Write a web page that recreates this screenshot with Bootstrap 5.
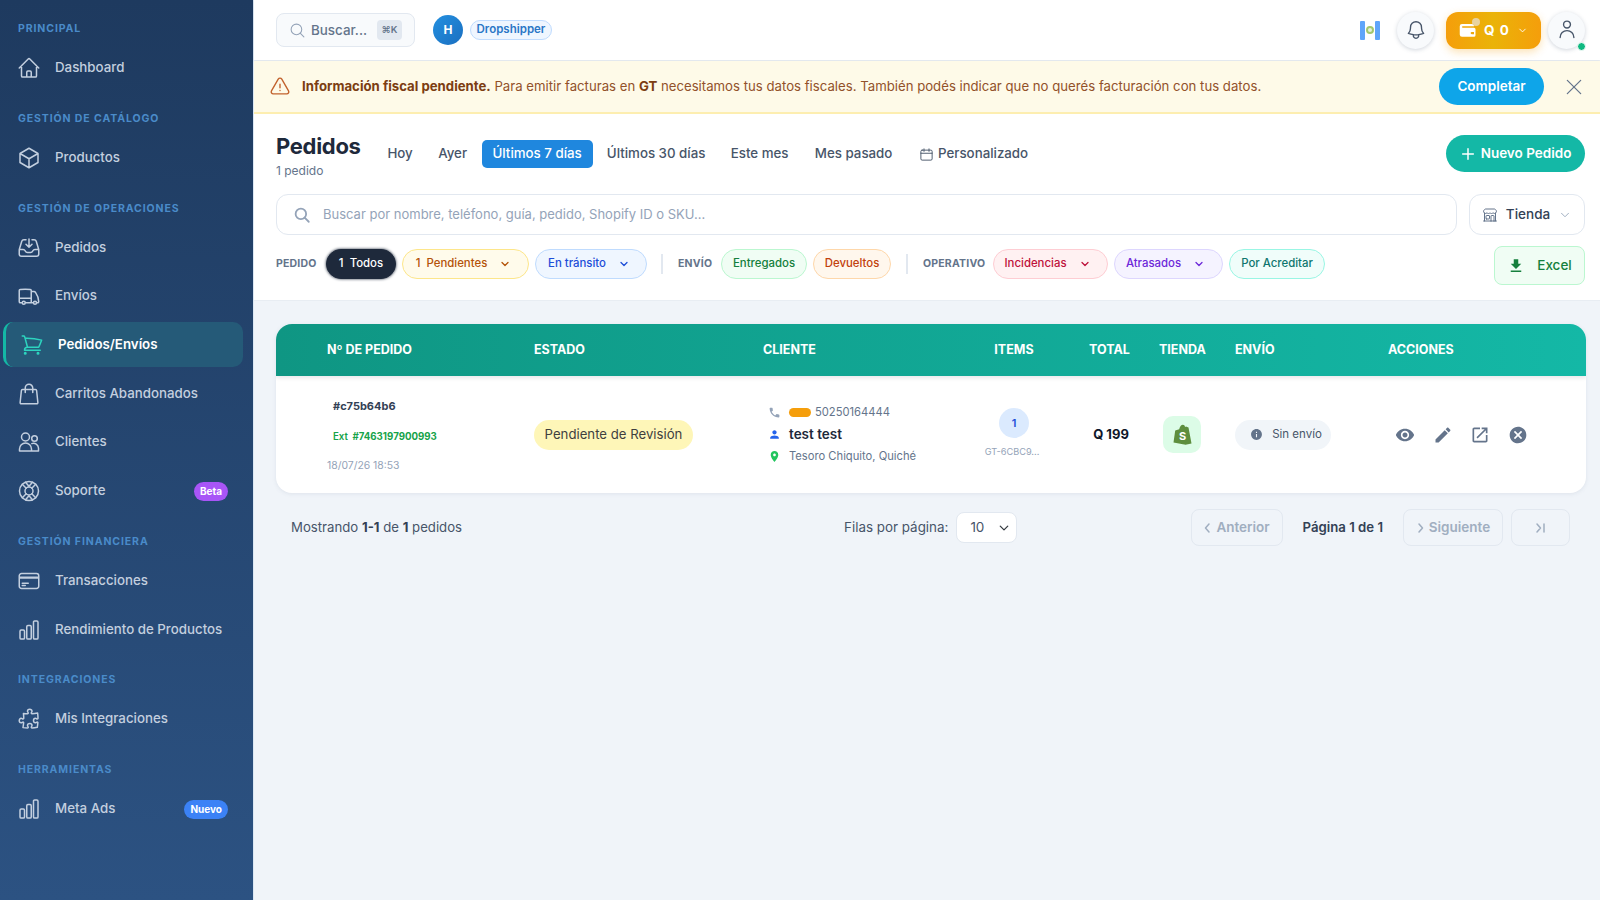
<!DOCTYPE html>
<html lang="es">
<head>
<meta charset="UTF-8">
<meta name="viewport" content="width=device-width, initial-scale=1.0">
<title>Pedidos</title>
<link href="https://cdn.jsdelivr.net/npm/bootstrap@5.3.0/dist/css/bootstrap.min.css" rel="stylesheet">
<style>
body { font-family: Inter, "Noto Sans", sans-serif; background: #f0f4f9; height: 900px; overflow: hidden; color: #1e293b; }
.ic { fill: none; stroke: currentColor; stroke-width: 1.5; stroke-linecap: round; stroke-linejoin: round; flex: none; }
.sol { fill: currentColor; flex: none; }

/* sidebar */
.side { width: 254px; height: 900px; flex: none; background: linear-gradient(180deg, #1e3a5f, #2c5282); padding: 21px 0 0 3px; border-right: 1px solid #dbe7f3; }
.side-label { font-size: 10.5px; font-weight: 700; letter-spacing: .9px; color: #4a8bc9; line-height: 16px; margin: 20.3px 0 8.5px 15px; text-transform: uppercase; }
.side-label:first-child { margin-top: 0; }
.side-item { width: 240px; height: 45px; margin-bottom: 3.7px; padding-left: 14px; display: flex; align-items: center; gap: 14px; color: #c3cfdf; font-size: 13.3px; font-weight: 500; border-radius: 10px; text-decoration: none; }
.side-item.on { background: #255a78; color: #fff; font-weight: 600; border-left: 3px solid #14b8a6; }
.side-item.on .ic { color: #2dd4bf; }
.side-pill { margin-left: auto; margin-right: 15px; font-size: 10px; font-weight: 700; color: #fff; border-radius: 10px; padding: 3px 6px; line-height: 13px; }

/* top bar */
.topb { height: 60px; background: #fff; padding: 0 15px 0 22px; flex-wrap: nowrap; box-shadow: 0 1px 2px rgba(15,23,42,.08); position: relative; }
.top-search { width: 139px; height: 34px; border: 1px solid #e2e8f0; border-radius: 8px; background: #f8fafc; padding: 0 12px 0 12px; gap: 5px; color: #64748b; font-size: 13.4px; font-weight: 500; }
.kbd-box { margin-left: auto; background: #e2e8f0; border-radius: 4px; color: #64748b; font-size: 9.5px; font-weight: 600; padding: 4px 4px; line-height: 12px; width: 25px; text-align: center; }
.ava { width: 30px; height: 30px; border-radius: 50%; background: linear-gradient(135deg, #2490e0, #1a6fc0); color: #fff; font-size: 12px; font-weight: 700; margin-left: 18px; }
.role-pill { margin-left: 7px; height: 20px; width: 82px; border: 1px solid #bfdbfe; background: #eff6ff; color: #2a76c6; border-radius: 10px; font-size: 11.5px; font-weight: 600; }
.flag-box { width: 20px; height: 19px; margin-right: 17px; }
.flag-box i { width: 5px; height: 19px; background: #60a5fa; border-radius: 1px; }
.flag-box b { width: 10px; height: 19px; background: #fff; display: flex; align-items: center; justify-content: center; }
.flag-box b span { width: 8px; height: 8px; border-radius: 50%; border: 2px solid #a3c76d; background: #e8f0d8; }
.round-btn { width: 37px; height: 37px; border-radius: 50%; background: #f8fafc; box-shadow: 0 1px 4px rgba(100,116,139,.3); color: #475569; position: relative; }
.wallet-btn { width: 95px; height: 37px; margin: 0 7px 0 12px; border-radius: 12px; background: linear-gradient(90deg, #f59e0b, #eab308 50%, #f59e0b); box-shadow: 0 3px 8px rgba(245,158,11,.3); color: #fff; font-weight: 700; font-size: 13.5px; letter-spacing: 1px; gap: 7px; position: relative; }
.wallet-dot { position: absolute; left: 26px; top: 6px; width: 8px; height: 8px; border-radius: 50%; background: #e8d3a0; }
.on-dot { position: absolute; right: -1px; bottom: -2px; width: 9px; height: 9px; border-radius: 50%; background: #10b981; border: 1px solid #fff; }

/* aviso */
.notice { height: 53px; margin: 1px 0 0; padding: 0 16px 0 15px; border-radius: 0; border: 0; border-bottom: 2px solid #fdeeb0; background: #fefae8; color: #92512a; font-size: 13.2px; gap: 11px; }
.notice strong { color: #7c3d12; font-weight: 700; }
.notice .ic { color: #c2622d; }
.btn-fill { width: 105px; height: 37px; border-radius: 19px; background: #0ea5e9; color: #fff; font-size: 13.5px; font-weight: 600; border: 0; padding: 0; margin-left: auto; margin-right: 9px; }

/* cabecera pedidos */
.head-box { height: 187px; background: #fff; border-bottom: 1px solid #e8edf3; padding: 17px 15px 0 22px; }
.title-main { font-size: 22px; font-weight: 700; line-height: 30px; color: #1e293b; letter-spacing: -.3px; margin: 0; }
.title-sub { font-size: 12px; color: #64748b; line-height: 16px; margin-top: 2px; }
.tab-row { margin-left: 13px; padding-top: 9px; gap: 0; }
.tab-link { height: 28px; padding: 0 !important; font-size: 13.3px; font-weight: 500; color: #475569; border-radius: 5px !important; display: flex; align-items: center; justify-content: center; }
.nav-pills .tab-link.active { background: #1f87de; color: #fff; }
.btn-new { width: 139px; height: 37px; border-radius: 19px; background: #14b8a6; color: #fff; font-size: 13.5px; font-weight: 600; border: 0; padding: 0; gap: 5px; margin-left: auto; margin-top: 4px; }
.search-line { gap: 12px; margin-top: 15px; }
.search-wide { flex: 1; height: 41px; border: 1px solid #e2e8f0; border-radius: 12px; padding: 0 16px; gap: 12px; color: #94a3b8; font-size: 13px; }
.store-btn { width: 116px; height: 41px; border: 1px solid #e2e8f0; border-radius: 12px; color: #334155; font-size: 13.5px; font-weight: 500; gap: 8px; }
.chip-row { margin-top: 8px; height: 42px; }
.chip-lbl { font-size: 10.5px; font-weight: 700; color: #64748b; letter-spacing: .2px; }
.chip { height: 30px; border-radius: 15px; border: 1px solid; font-size: 11.4px; font-weight: 500; gap: 6px; flex: none; }
.chip-sep { width: 2px; height: 20px; background: #e2e8f0; }
.btn-excel { width: 91px; height: 39px; margin-left: auto; margin-top: 3px; border: 1px solid #bbf7d0; border-radius: 8px; background: #f0fdf4; color: #15803d; font-size: 13.5px; font-weight: 500; gap: 12px; padding: 0; }

/* tabla */
.tbl-card { margin: 23px 14px 0 22px; width: 1310px; border: 0; border-radius: 16px; overflow: hidden; box-shadow: 0 1px 4px rgba(100,116,139,.12); }
.tbl-main { table-layout: fixed; width: 1310px; margin: 0; }
.tbl-main th { height: 52px; border: 0; background: transparent; color: #fff; font-size: 12.5px; font-weight: 700; vertical-align: middle; padding: 0 16px; white-space: nowrap; }
.tbl-main thead tr { background: linear-gradient(90deg, #0f9683, #14b8a6); box-shadow: 0 2px 4px rgba(15,23,42,.1); }
.tbl-main td { height: 117px; border: 0; vertical-align: middle; padding: 0 16px; }
.tbl-main td.order-cell { padding: 2px 16px 0 51px; }
.order-id { font-size: 11px; font-weight: 700; color: #334155; margin: 0 0 15px 6px; line-height: 16px; }
.order-ext { font-size: 9.7px; font-weight: 600; color: #16a34a; margin: 0 0 13px 6px; line-height: 16px; }
.order-ext b { font-weight: 700; margin-left: 2px; }
.order-date { font-size: 10.4px; color: #94a3b8; line-height: 16px; }
.state-pill { width: 159px; height: 30px; background: #fef6b8; border-radius: 15px; color: #3f3f3f; font-size: 13.2px; }
.cli-line { gap: 8px; padding-left: 5px; height: 22px; color: #64748b; font-size: 11.2px; }
.cli-line .nm { color: #1e293b; font-size: 13.5px; font-weight: 600; }
.phone-tag { width: 22px; height: 9px; border-radius: 5px; background: #f59e0b; margin-right: -4px; }
.tbl-main td.qty-cell { padding-bottom: 2px; }
.qty-dot { width: 30px; height: 30px; border-radius: 50%; background: #dbeafe; color: #1d4ed8; font-size: 11px; font-weight: 600; }
.qty-sku { font-size: 9.2px; color: #94a3b8; margin: 7px 0 0 -4px; white-space: nowrap; line-height: 14px; }
.tot-val { font-size: 13px; font-weight: 700; color: #0f172a; }
.tbl-main td.tot-val { padding-left: 19px; padding-right: 13px; }
.tbl-main td.shop-cell { padding-left: 20px; padding-right: 0; }
.shop-box { width: 38px; height: 37px; border-radius: 10px; background: #dcfce7; }
.ship-pill { width: 96px; height: 30px; background: #f1f5f9; border-radius: 15px; color: #475569; font-size: 11.5px; gap: 9px; padding-left: 6px; }
.act-row { gap: 17.5px; padding-left: 7px; color: #64748b; }

/* pie */
.pager { margin: 16px 30px 0 37px; width: 1279px; color: #475569; font-size: 13.2px; height: 37px; }
.pager b { font-weight: 700; color: #334155; }
.per-page { margin-left: 373px; gap: 8px; font-size: 13.4px; }
.sel-mini { width: 61px; height: 31px; padding: 0 0 0 13px; border-color: #e2e8f0; border-radius: 8px; font-size: 13.5px; color: #475569; background-size: 10px; background-position: right 7px center; }
.pg-btn { height: 37px; border: 1px solid #e2e8f0; border-radius: 8px; background: transparent; color: #a0aec0; font-size: 13.5px; font-weight: 600; gap: 4px; padding: 0; }
.pg-txt { font-weight: 600; color: #334155; margin: 0 20px; white-space: nowrap; }
</style>
</head>
<body class="d-flex">

<svg width="0" height="0" class="d-none">
  <symbol id="chart" viewBox="0 0 24 24"><path d="M3 13.125C3 12.504 3.504 12 4.125 12h2.25c.621 0 1.125.504 1.125 1.125v6.75C7.5 20.496 6.996 21 6.375 21h-2.25A1.125 1.125 0 013 19.875v-6.75zM9.75 8.625c0-.621.504-1.125 1.125-1.125h2.25c.621 0 1.125.504 1.125 1.125v11.25c0 .621-.504 1.125-1.125 1.125h-2.25a1.125 1.125 0 01-1.125-1.125V8.625zM16.5 4.125c0-.621.504-1.125 1.125-1.125h2.25C20.496 3 21 3.504 21 4.125v15.75c0 .621-.504 1.125-1.125 1.125h-2.25a1.125 1.125 0 01-1.125-1.125V4.125z"/></symbol>
  <symbol id="chev" viewBox="0 0 24 24"><path d="M6 9l6 6 6-6"/></symbol>
</svg>

<!-- Menu lateral -->
<aside class="side">
  <div class="side-label">Principal</div>
  <a class="side-item" href="#"><svg class="ic" width="24" height="24" viewBox="0 0 24 24"><path d="M2.25 12l8.954-8.955c.44-.439 1.152-.439 1.591 0L21.75 12M4.5 9.75v10.125c0 .621.504 1.125 1.125 1.125H9.75v-4.875c0-.621.504-1.125 1.125-1.125h2.25c.621 0 1.125.504 1.125 1.125V21h4.125c.621 0 1.125-.504 1.125-1.125V9.75M8.25 21h8.25"/></svg>Dashboard</a>
  <div class="side-label">Gestión de Catálogo</div>
  <a class="side-item" href="#"><svg class="ic" width="24" height="24" viewBox="0 0 24 24"><path d="M21 7.5l-9-5.25L3 7.5m18 0l-9 5.25m9-5.25v9l-9 5.25M3 7.5l9 5.25M3 7.5v9l9 5.25m0-9v9"/></svg>Productos</a>
  <div class="side-label">Gestión de Operaciones</div>
  <a class="side-item" href="#"><svg class="ic" width="24" height="24" viewBox="0 0 24 24"><path d="M9 3.75H6.912a2.25 2.25 0 00-2.15 1.588L2.35 13.177a2.25 2.25 0 00-.1.661V18a2.25 2.25 0 002.25 2.25h15A2.25 2.25 0 0021.75 18v-4.162c0-.224-.034-.447-.1-.661L19.24 5.338a2.25 2.25 0 00-2.15-1.588H15M2.25 13.5h3.86a2.25 2.25 0 012.012 1.244l.256.512a2.25 2.25 0 002.013 1.244h3.218a2.25 2.25 0 002.013-1.244l.256-.512a2.25 2.25 0 012.013-1.244h3.859M12 3v8.25m0 0l-3-3m3 3l3-3"/></svg>Pedidos</a>
  <a class="side-item" href="#"><svg class="ic" width="24" height="24" viewBox="0 0 24 24"><path d="M8.25 18.75a1.5 1.5 0 01-3 0m3 0a1.5 1.5 0 00-3 0m3 0h6m-9 0H3.375a1.125 1.125 0 01-1.125-1.125V14.25m17.25 4.5a1.5 1.5 0 01-3 0m3 0a1.5 1.5 0 00-3 0m3 0h1.125c.621 0 1.129-.504 1.09-1.124a17.902 17.902 0 00-3.213-9.193 2.056 2.056 0 00-1.58-.86H14.25M16.5 18.75h-2.25m0-11.177v-.958c0-.568-.422-1.048-.987-1.106a48.554 48.554 0 00-10.026 0 1.106 1.106 0 00-.987 1.106v7.635m12-6.677v6.677m0 4.5v-4.5m0 0h-12"/></svg>Envíos</a>
  <a class="side-item on" href="#"><svg class="ic" width="24" height="24" viewBox="0 0 24 24"><path d="M2.25 3h1.386c.51 0 .955.343 1.087.835l.383 1.437M7.5 14.25a3 3 0 00-3 3h15.75m-12.75-3h11.218c1.121-2.3 2.1-4.684 2.924-7.138a60.114 60.114 0 00-16.536-1.84M7.5 14.25L5.106 5.272M6 20.25a.75.75 0 11-1.5 0 .75.75 0 011.5 0zm12.75 0a.75.75 0 11-1.5 0 .75.75 0 011.5 0z"/></svg>Pedidos/Envíos</a>
  <a class="side-item" href="#"><svg class="ic" width="24" height="24" viewBox="0 0 24 24"><path d="M15.75 10.5V6a3.75 3.75 0 10-7.5 0v4.5m11.356-1.993l1.263 12c.07.665-.45 1.243-1.119 1.243H4.25a1.125 1.125 0 01-1.12-1.243l1.264-12A1.125 1.125 0 015.513 7.5h12.974c.576 0 1.059.435 1.119 1.007z"/></svg>Carritos Abandonados</a>
  <a class="side-item" href="#"><svg class="ic" width="24" height="24" viewBox="0 0 24 24"><circle cx="8.5" cy="7" r="4"/><circle cx="17.5" cy="8.5" r="2.8"/><path d="M2.5 21v-2a6 6 0 0112 0v2zM14.8 13.6a5 5 0 016.7 4.4v3h-7"/></svg>Clientes</a>
  <a class="side-item" href="#"><svg class="ic" width="24" height="24" viewBox="0 0 24 24"><circle cx="12" cy="12" r="9.5"/><circle cx="12" cy="12" r="4"/><path d="M5.3 5.3l3.9 3.9M18.7 5.3l-3.9 3.9M5.3 18.7l3.9-3.9M18.7 18.7l-3.9-3.9M8.5 3.2l3.5 4 3.5-4M8.5 20.8l3.5-4 3.5 4"/></svg>Soporte<span class="side-pill" style="background:#a855f7">Beta</span></a>
  <div class="side-label">Gestión Financiera</div>
  <a class="side-item" href="#"><svg class="ic" width="24" height="24" viewBox="0 0 24 24"><path d="M2.25 8.25h19.5M2.25 9h19.5m-16.5 5.25h6m-6 2.25h3m-3.75 3h15a2.25 2.25 0 002.25-2.25V6.75A2.25 2.25 0 0019.5 4.5h-15a2.25 2.25 0 00-2.25 2.25v10.5A2.25 2.25 0 004.5 19.5z"/></svg>Transacciones</a>
  <a class="side-item" href="#"><svg class="ic" width="24" height="24"><use href="#chart"/></svg>Rendimiento de Productos</a>
  <div class="side-label">Integraciones</div>
  <a class="side-item" href="#"><svg class="ic" width="24" height="24" viewBox="0 0 24 24"><path d="M14.25 6.087c0-.355.186-.676.401-.959.221-.29.349-.634.349-1.003 0-1.036-1.007-1.875-2.25-1.875s-2.25.84-2.25 1.875c0 .369.128.713.349 1.003.215.283.401.604.401.959v0a.64.64 0 01-.657.643 48.39 48.39 0 01-4.163-.3c.186 1.613.293 3.25.315 4.907a.656.656 0 01-.658.663v0c-.355 0-.676-.186-.959-.401a1.647 1.647 0 00-1.003-.349c-1.036 0-1.875 1.007-1.875 2.25s.84 2.25 1.875 2.25c.369 0 .713-.128 1.003-.349.283-.215.604-.401.959-.401v0c.31 0 .555.26.532.57a48.039 48.039 0 01-.642 5.056c1.518.19 3.058.309 4.616.354a.64.64 0 00.657-.643v0c0-.355-.186-.676-.401-.959a1.647 1.647 0 01-.349-1.003c0-1.035 1.008-1.875 2.25-1.875 1.243 0 2.25.84 2.25 1.875 0 .369-.128.713-.349 1.003-.215.283-.4.604-.4.959v0c0 .333.277.599.61.58a48.1 48.1 0 005.427-.63 48.05 48.05 0 00.582-4.717.532.532 0 00-.533-.57v0c-.355 0-.676.186-.959.401-.29.221-.634.349-1.003.349-1.035 0-1.875-1.007-1.875-2.25s.84-2.25 1.875-2.25c.37 0 .713.128 1.003.349.283.215.604.401.96.401v0a.656.656 0 00.658-.663 48.422 48.422 0 00-.37-5.36c-1.886.342-3.81.574-5.766.689a.578.578 0 01-.61-.58v0z"/></svg>Mis Integraciones</a>
  <div class="side-label">Herramientas</div>
  <a class="side-item" href="#"><svg class="ic" width="24" height="24"><use href="#chart"/></svg>Meta Ads<span class="side-pill" style="background:#3b82f6">Nuevo</span></a>
</aside>

<main class="flex-grow-1">
  <!-- Barra superior -->
  <nav class="navbar topb">
    <div class="d-flex align-items-center">
      <div class="top-search d-flex align-items-center">
        <svg class="ic" width="17" height="17" viewBox="0 0 24 24" style="color:#94a3b8"><circle cx="10.5" cy="10.5" r="7.5"/><path d="M21 21l-5.2-5.2"/></svg>
        <span>Buscar...</span><span class="kbd-box">⌘K</span>
      </div>
      <div class="ava d-flex align-items-center justify-content-center">H</div>
      <div class="role-pill d-flex align-items-center justify-content-center">Dropshipper</div>
    </div>
    <div class="d-flex align-items-center">
      <div class="flag-box d-flex"><i></i><b><span></span></b><i></i></div>
      <div class="round-btn d-flex align-items-center justify-content-center"><svg class="ic" width="22" height="22" viewBox="0 0 24 24"><path d="M14.857 17.082a23.848 23.848 0 005.454-1.31A8.967 8.967 0 0118 9.75v-.7V9A6 6 0 006 9v.75a8.967 8.967 0 01-2.312 6.022c1.733.64 3.56 1.085 5.455 1.31m5.714 0a24.255 24.255 0 01-5.714 0m5.714 0a3 3 0 11-5.714 0"/></svg></div>
      <div class="wallet-btn d-flex align-items-center justify-content-center">
        <svg class="sol" width="18" height="18" viewBox="0 0 24 24"><path d="M4 4h14a2 2 0 012 2v1H5a1 1 0 000 2h15a2 2 0 012 2v8a2 2 0 01-2 2H4a3 3 0 01-3-3V7a3 3 0 013-3zm13 10.5a1.5 1.5 0 100 3h3v-3z"/></svg>
        <span class="wallet-dot"></span>
        <span>Q 0</span>
        <svg class="ic" width="11" height="11" style="stroke-width:2"><use href="#chev"/></svg>
      </div>
      <div class="round-btn d-flex align-items-center justify-content-center"><svg class="ic" width="22" height="22" viewBox="0 0 24 24"><path d="M15.75 6a3.75 3.75 0 11-7.5 0 3.75 3.75 0 017.5 0zM4.5 20.118a7.5 7.5 0 0115 0"/></svg><span class="on-dot"></span></div>
    </div>
  </nav>

  <!-- Aviso fiscal -->
  <div class="alert notice d-flex align-items-center" role="alert">
    <svg class="ic" width="22" height="22" viewBox="0 0 24 24"><path d="M12 9v3.75m-9.303 3.376c-.866 1.5.217 3.374 1.948 3.374h14.71c1.73 0 2.813-1.874 1.948-3.374L13.949 3.378c-.866-1.5-3.032-1.5-3.898 0L2.697 16.126zM12 15.75h.007v.008H12v-.008z"/></svg>
    <span><strong>Información fiscal pendiente.</strong> Para emitir facturas en <strong>GT</strong> necesitamos tus datos fiscales. También podés indicar que no querés facturación con tus datos.</span>
    <button class="btn btn-fill">Completar</button>
    <svg class="ic" width="20" height="20" viewBox="0 0 24 24" style="color:#64748b"><path d="M4 4l16 16M20 4L4 20"/></svg>
  </div>

  <!-- Cabecera de pedidos -->
  <section class="head-box">
    <div class="d-flex">
      <div>
        <h1 class="title-main">Pedidos</h1>
        <div class="title-sub">1 pedido</div>
      </div>
      <ul class="nav nav-pills tab-row flex-nowrap">
        <li class="nav-item"><a class="nav-link tab-link" style="width:53px" href="#">Hoy</a></li>
        <li class="nav-item"><a class="nav-link tab-link" style="width:52px" href="#">Ayer</a></li>
        <li class="nav-item"><a class="nav-link tab-link active" style="width:111px;margin-left:3px" href="#">Últimos 7 días</a></li>
        <li class="nav-item"><a class="nav-link tab-link" style="width:127px" href="#">Últimos 30 días</a></li>
        <li class="nav-item"><a class="nav-link tab-link" style="width:80px" href="#">Este mes</a></li>
        <li class="nav-item"><a class="nav-link tab-link" style="width:108px" href="#">Mes pasado</a></li>
        <li class="nav-item"><a class="nav-link tab-link gap-1" style="width:132px" href="#"><svg class="ic" width="15" height="15" viewBox="0 0 24 24"><rect x="3" y="5" width="18" height="16" rx="2"/><path d="M3 10h18M8 3v4M16 3v4"/></svg>Personalizado</a></li>
      </ul>
      <button class="btn btn-new d-flex align-items-center justify-content-center"><svg class="ic" width="16" height="16" viewBox="0 0 24 24" style="stroke-width:2.2"><path d="M12 4v16M4 12h16"/></svg>Nuevo Pedido</button>
    </div>

    <div class="search-line d-flex">
      <div class="search-wide d-flex align-items-center">
        <svg class="ic" width="18" height="18" viewBox="0 0 24 24" style="stroke-width:2.4"><circle cx="10.5" cy="10.5" r="7"/><path d="M21 21l-5.5-5.5"/></svg>
        <span>Buscar por nombre, teléfono, guía, pedido, Shopify ID o SKU...</span>
      </div>
      <div class="store-btn d-flex align-items-center justify-content-center">
        <svg class="ic" width="16" height="16" viewBox="0 0 24 24" style="color:#64748b"><path d="M13.5 21v-7.5a.75.75 0 01.75-.75h3a.75.75 0 01.75.75V21m-4.5 0H2.36m11.14 0H18m0 0h3.64m-1.39 0V9.349m-16.5 11.65V9.35m0 0a3.001 3.001 0 003.75-.615A2.993 2.993 0 009.75 9.75c.896 0 1.7-.393 2.25-1.016a2.993 2.993 0 002.25 1.016c.896 0 1.7-.393 2.25-1.016a3.001 3.001 0 003.75.614m-16.5 0a3.004 3.004 0 01-.621-4.72L4.318 3.44A1.5 1.5 0 015.378 3h13.243a1.5 1.5 0 011.06.44l1.19 1.189a3 3 0 01-.621 4.72m-13.5 8.65h3.75a.75.75 0 00.75-.75V13.5a.75.75 0 00-.75-.75H6.75a.75.75 0 00-.75.75v3.75c0 .415.336.75.75.75z"/></svg>
        Tienda
        <svg class="ic" width="14" height="14" style="color:#94a3b8"><use href="#chev"/></svg>
      </div>
    </div>

    <div class="chip-row d-flex align-items-center">
      <span class="chip-lbl" style="width:50px">PEDIDO</span>
      <span class="chip d-flex align-items-center justify-content-center" style="width:70px;background:#1e293b;border-color:#1e293b;color:#fff;box-shadow:0 0 3px #1e293b;margin-right:6px">1&nbsp; Todos</span>
      <span class="chip d-flex align-items-center justify-content-center" style="width:127px;background:#fffbeb;border-color:#fde68a;color:#b45309;margin-right:6px;gap:12px;padding-right:4px"><span>1&nbsp; Pendientes</span><svg class="ic" width="12" height="12" style="stroke-width:2.6"><use href="#chev"/></svg></span>
      <span class="chip d-flex align-items-center justify-content-center" style="width:112px;background:#eff6ff;border-color:#bfdbfe;color:#1d4ed8;gap:12px;padding-right:4px"><span>En tránsito</span><svg class="ic" width="12" height="12" style="stroke-width:2.6"><use href="#chev"/></svg></span>
      <span class="chip-sep" style="margin:0 15px 0 14px"></span>
      <span class="chip-lbl" style="width:43px">ENVÍO</span>
      <span class="chip d-flex align-items-center justify-content-center" style="width:86px;background:#f0fdf4;border-color:#bbf7d0;color:#15803d;margin-right:6px">Entregados</span>
      <span class="chip d-flex align-items-center justify-content-center" style="width:78px;background:#fff7ed;border-color:#fed7aa;color:#c2410c">Devueltos</span>
      <span class="chip-sep" style="margin:0 15px"></span>
      <span class="chip-lbl" style="width:70px">OPERATIVO</span>
      <span class="chip d-flex align-items-center justify-content-center" style="width:115px;background:#fff1f2;border-color:#fecdd3;color:#be123c;margin-right:6px;gap:12px;padding-right:6px"><span>Incidencias</span><svg class="ic" width="12" height="12" style="stroke-width:2.6"><use href="#chev"/></svg></span>
      <span class="chip d-flex align-items-center justify-content-center" style="width:109px;background:#f5f3ff;border-color:#ddd6fe;color:#6d28d9;margin-right:6px;gap:12px;padding-right:6px"><span>Atrasados</span><svg class="ic" width="12" height="12" style="stroke-width:2.6"><use href="#chev"/></svg></span>
      <span class="chip d-flex align-items-center justify-content-center" style="width:96px;background:#f0fdfa;border-color:#99f6e4;color:#0f766e">Por Acreditar</span>
      <button class="btn btn-excel d-flex align-items-center justify-content-center"><svg class="sol" width="18" height="18" viewBox="0 0 24 24"><path d="M5 20h14v-2H5v2zM19 9h-4V3H9v6H5l7 7 7-7z"/></svg>Excel</button>
    </div>
  </section>

  <!-- Tabla de pedidos -->
  <div class="card tbl-card">
    <table class="table tbl-main">
      <colgroup><col style="width:242px"><col style="width:229px"><col style="width:208px"><col style="width:118px"><col style="width:70px"><col style="width:76px"><col style="width:153px"><col style="width:214px"></colgroup>
      <thead>
        <tr>
          <th style="padding-left:51px">Nº DE PEDIDO</th>
          <th>ESTADO</th>
          <th>CLIENTE</th>
          <th class="text-center">ITEMS</th>
          <th class="text-center">TOTAL</th>
          <th class="text-center">TIENDA</th>
          <th>ENVÍO</th>
          <th>ACCIONES</th>
        </tr>
      </thead>
      <tbody>
        <tr>
          <td class="order-cell">
            <div class="order-id">#c75b64b6</div>
            <div class="order-ext">Ext <b>#7463197900993</b></div>
            <div class="order-date">18/07/26 18:53</div>
          </td>
          <td><span class="state-pill d-flex align-items-center justify-content-center">Pendiente de Revisión</span></td>
          <td>
            <div class="cli-line d-flex align-items-center"><svg class="sol" width="13" height="13" viewBox="0 0 24 24" style="color:#94a3b8"><path d="M6.62 10.79c1.44 2.83 3.76 5.14 6.59 6.59l2.2-2.2c.27-.27.67-.36 1.02-.24 1.12.37 2.33.57 3.57.57.55 0 1 .45 1 1V20c0 .55-.45 1-1 1-9.39 0-17-7.61-17-17 0-.55.45-1 1-1h3.5c.55 0 1 .45 1 1 0 1.25.2 2.45.57 3.57.11.35.03.74-.25 1.02l-2.2 2.2z"/></svg><span class="phone-tag"></span><span>50250164444</span></div>
            <div class="cli-line d-flex align-items-center"><svg class="sol" width="13" height="13" viewBox="0 0 24 24" style="color:#2563eb"><path d="M12 12c2.21 0 4-1.79 4-4s-1.79-4-4-4-4 1.79-4 4 1.79 4 4 4zm0 2c-2.67 0-8 1.34-8 4v2h16v-2c0-2.66-5.33-4-8-4z"/></svg><span class="nm">test test</span></div>
            <div class="cli-line d-flex align-items-center"><svg class="sol" width="13" height="13" viewBox="0 0 24 24" style="color:#22c55e"><path d="M12 2C8.13 2 5 5.13 5 9c0 5.25 7 13 7 13s7-7.75 7-13c0-3.87-3.13-7-7-7zm0 9.5c-1.38 0-2.5-1.12-2.5-2.5s1.12-2.5 2.5-2.5 2.5 1.12 2.5 2.5-1.12 2.5-2.5 2.5z"/></svg><span>Tesoro Chiquito, Quiché</span></div>
          </td>
          <td class="text-center qty-cell">
            <div class="qty-dot d-flex align-items-center justify-content-center mx-auto">1</div>
            <div class="qty-sku">GT-6CBC9...</div>
          </td>
          <td class="text-center tot-val">Q&nbsp;199</td>
          <td class="shop-cell">
            <div class="shop-box d-flex align-items-center justify-content-center">
              <svg width="19" height="21" viewBox="0 0 19 21"><path d="M13 2.6l-.9.3C11.7 1.6 11 .8 9.9 .8 8.2 .8 6.7 2.7 6.2 5.2L3 6.2c-.8.2-.8.3-.9 1L.5 18.5 12.6 20.8 18.5 19.5 15.5 3.4 13 2.6z" fill="#5e8e3e"/><text x="9.5" y="16" font-size="11" font-weight="700" font-family="Inter, sans-serif" fill="#fff" text-anchor="middle">S</text></svg>
            </div>
          </td>
          <td>
            <div class="ship-pill d-flex align-items-center justify-content-center"><svg class="sol" width="13" height="13" viewBox="0 0 24 24" style="color:#64748b"><path d="M12 2C6.48 2 2 6.48 2 12s4.48 10 10 10 10-4.48 10-10S17.52 2 12 2zm1 15h-2v-6h2v6zm0-8h-2V7h2v2z"/></svg>Sin envío</div>
          </td>
          <td>
            <div class="act-row d-flex align-items-center">
              <svg class="sol" width="20" height="20" viewBox="0 0 24 24"><path d="M12 4.5C7 4.5 2.73 7.61 1 12c1.73 4.39 6 7.5 11 7.5s9.27-3.11 11-7.5c-1.73-4.39-6-7.5-11-7.5zM12 17c-2.76 0-5-2.24-5-5s2.24-5 5-5 5 2.24 5 5-2.24 5-5 5zm0-8c-1.66 0-3 1.34-3 3s1.34 3 3 3 3-1.34 3-3-1.34-3-3-3z"/></svg>
              <svg class="sol" width="20" height="20" viewBox="0 0 24 24"><path d="M3 17.25V21h3.75L17.81 9.94l-3.75-3.75L3 17.25zM20.71 7.04c.39-.39.39-1.02 0-1.41l-2.34-2.34c-.39-.39-1.02-.39-1.41 0l-1.83 1.83 3.75 3.75 1.83-1.83z"/></svg>
              <svg class="sol" width="20" height="20" viewBox="0 0 24 24"><path d="M19 19H5V5h7V3H5c-1.11 0-2 .9-2 2v14c0 1.1.89 2 2 2h14c1.1 0 2-.9 2-2v-7h-2v7zM14 3v2h3.59l-9.83 9.83 1.41 1.41L19 6.41V10h2V3h-7z"/></svg>
              <svg class="sol" width="20" height="20" viewBox="0 0 24 24"><path d="M12 2C6.47 2 2 6.47 2 12s4.47 10 10 10 10-4.47 10-10S17.53 2 12 2zm5 13.59L15.59 17 12 13.41 8.41 17 7 15.59 10.59 12 7 8.41 8.41 7 12 10.59 15.59 7 17 8.41 13.41 12 17 15.59z"/></svg>
            </div>
          </td>
        </tr>
      </tbody>
    </table>
  </div>

  <!-- Paginacion -->
  <div class="pager d-flex align-items-center">
    <span style="width:180px">Mostrando <b>1-1</b> de <b>1</b> pedidos</span>
    <div class="per-page d-flex align-items-center">
      <span>Filas por página:</span>
      <select class="form-select sel-mini"><option>10</option></select>
    </div>
    <div class="d-flex align-items-center ms-auto">
      <button class="btn pg-btn d-flex align-items-center justify-content-center" style="width:92px"><svg class="ic" width="9" height="12" viewBox="0 0 9 12"><path d="M6 2L2.5 6 6 10"/></svg>Anterior</button>
      <span class="pg-txt">Página 1 de 1</span>
      <button class="btn pg-btn d-flex align-items-center justify-content-center me-2" style="width:100px"><svg class="ic" width="9" height="12" viewBox="0 0 9 12"><path d="M3 2l3.5 4L3 10"/></svg>Siguiente</button>
      <button class="btn pg-btn d-flex align-items-center justify-content-center" style="width:59px"><svg class="ic" width="14" height="12" viewBox="0 0 14 12"><path d="M3 2l3.5 4L3 10M10 2v8"/></svg></button>
    </div>
  </div>
</main>

<script src="https://cdn.jsdelivr.net/npm/bootstrap@5.3.0/dist/js/bootstrap.bundle.min.js"></script>
</body>
</html>
